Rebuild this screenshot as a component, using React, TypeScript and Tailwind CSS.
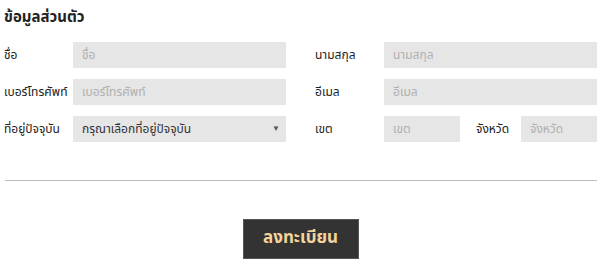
import React from "react";

const font = { fontFamily: '"Noto Sans Thai", "Noto Sans", "Liberation Sans", sans-serif' };

function Field({ label, placeholder }: { label: string; placeholder: string }) {
  return (
    <div className="flex items-center">
      <div className="w-[69px] text-[12px] text-[#222]">{label}</div>
      <div className="w-[213px] h-[26px] bg-[#e6e6e6] flex items-center pl-[9px] text-[12px] text-[#b0b0b0]">
        {placeholder}
      </div>
    </div>
  );
}

export default function App() {
  return (
    <div className="w-[600px] h-[266px] bg-white pl-[4px] pr-[3px]" style={font}>
      <div className="pt-[8px] h-[42px] text-[15px] font-bold text-[#222] leading-[20px]">ข้อมูลส่วนตัว</div>
      <div className="flex flex-col gap-[11px]">
        <div className="flex justify-between">
          <Field label="ชื่อ" placeholder="ชื่อ" />
          <Field label="นามสกุล" placeholder="นามสกุล" />
        </div>
        <div className="flex justify-between">
          <Field label="เบอร์โทรศัพท์" placeholder="เบอร์โทรศัพท์" />
          <Field label="อีเมล" placeholder="อีเมล" />
        </div>
        <div className="flex justify-between">
          <div className="flex items-center">
            <div className="w-[69px] text-[12px] text-[#222]">ที่อยู่ปัจจุบัน</div>
            <div className="w-[213px] h-[26px] bg-[#e6e6e6] flex items-center justify-between pl-[9px] pr-[6px] text-[12px] text-[#333]">
              <span>กรุณาเลือกที่อยู่ปัจจุบัน</span>
              <span className="text-[8px] text-[#555]">▼</span>
            </div>
          </div>
          <div className="flex items-center">
            <div className="w-[69px] text-[12px] text-[#222]">เขต</div>
            <div className="w-[76px] h-[26px] bg-[#e6e6e6] flex items-center pl-[9px] text-[12px] text-[#b0b0b0]">เขต</div>
            <div className="w-[45px] ml-[16px] text-[12px] text-[#222]">จังหวัด</div>
            <div className="w-[76px] h-[26px] bg-[#e6e6e6] flex items-center pl-[9px] text-[12px] text-[#b0b0b0]">จังหวัด</div>
          </div>
        </div>
      </div>
      <div className="mt-[38px] ml-[1px] h-px bg-[#bdbdbd]" />
      <div className="flex justify-center pt-[38px]">
        <button className="w-[116px] h-[40px] bg-[#333] border border-[#555] text-[#f3d39a] text-[17px] font-bold">
          ลงทะเบียน
        </button>
      </div>
    </div>
  );
}
